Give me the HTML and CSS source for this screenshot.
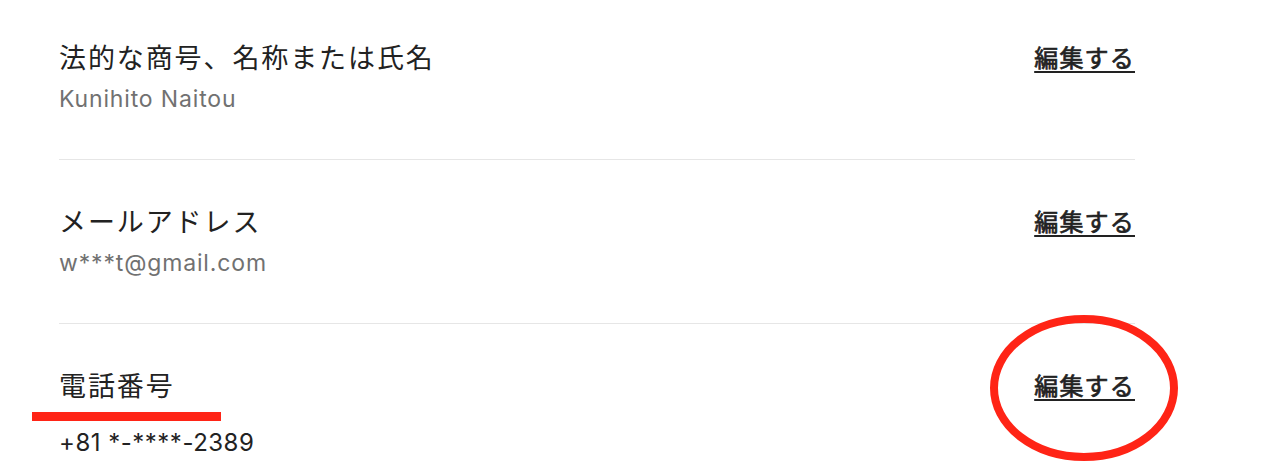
FILE: index.html
```html
<!DOCTYPE html>
<html lang="ja">
<head>
<meta charset="utf-8">
<title>個人情報</title>
<link rel="stylesheet" href="styles.css">
</head>
<body>
<main class="page">
  <section class="list">
    <div class="row">
      <div class="info">
        <div class="label">法的な商号、名称または氏名</div>
        <div class="value">Kunihito Naitou</div>
      </div>
      <a class="edit" href="#">編集する</a>
    </div>
    <div class="row">
      <div class="info">
        <div class="label">メールアドレス</div>
        <div class="value">w***t@gmail.com</div>
      </div>
      <a class="edit" href="#">編集する</a>
    </div>
    <div class="row row-last">
      <div class="info">
        <div class="label">電話番号</div>
        <div class="value value-phone">+81 *-****-2389</div>
      </div>
      <a class="edit" href="#">編集する</a>
    </div>
  </section>
  <div class="mark-line"></div>
  <svg class="mark-circle" width="200" height="156" viewBox="0 0 200 156" aria-hidden="true">
    <ellipse cx="100" cy="78" rx="90" ry="69" fill="none" stroke="#ff2416" stroke-width="8"/>
  </svg>
</main>
</body>
</html>
```

FILE: styles.css
```css
html, body {
  margin: 0;
  padding: 0;
  background: #ffffff;
}

body {
  font-family: Inter, "Noto Sans CJK JP", sans-serif;
  color: #222222;
  overflow: hidden;
}

.page {
  position: relative;
  width: 1280px;
  height: 463px;
  overflow: hidden;
}

.list {
  margin-left: 59px;
  width: 1076px;
}

.row {
  display: flex;
  justify-content: space-between;
  align-items: flex-start;
  padding: 43px 0 46px;
  border-bottom: 1px solid #e6e6e6;
}

.row:first-child {
  padding-top: 39px;
}

.row-last {
  border-bottom: none;
  padding-bottom: 0;
}

.label {
  font-family: "Noto Sans CJK JP", sans-serif;
  font-size: 27px;
  line-height: 36px;
  letter-spacing: 1.9px;
  color: #222222;
}

.value {
  margin-top: 10px;
  font-size: 23px;
  line-height: 28px;
  letter-spacing: 0.85px;
  color: #717171;
}

.value-phone {
  margin-top: 26px;
  font-size: 24px;
  letter-spacing: 0.5px;
  color: #222222;
}

.edit {
  font-family: "Noto Sans CJK JP", sans-serif;
  font-size: 24px;
  line-height: 36px;
  font-weight: 400;
  -webkit-text-stroke: 0.7px #222222;
  letter-spacing: 1.2px;
  color: #222222;
  text-decoration: underline;
  text-decoration-thickness: 2px;
  text-underline-offset: 4px;
}

.mark-line {
  position: absolute;
  left: 32px;
  top: 412px;
  width: 189px;
  height: 9px;
  background: #ff2416;
}

.mark-circle {
  position: absolute;
  left: 984px;
  top: 310px;
}
```
